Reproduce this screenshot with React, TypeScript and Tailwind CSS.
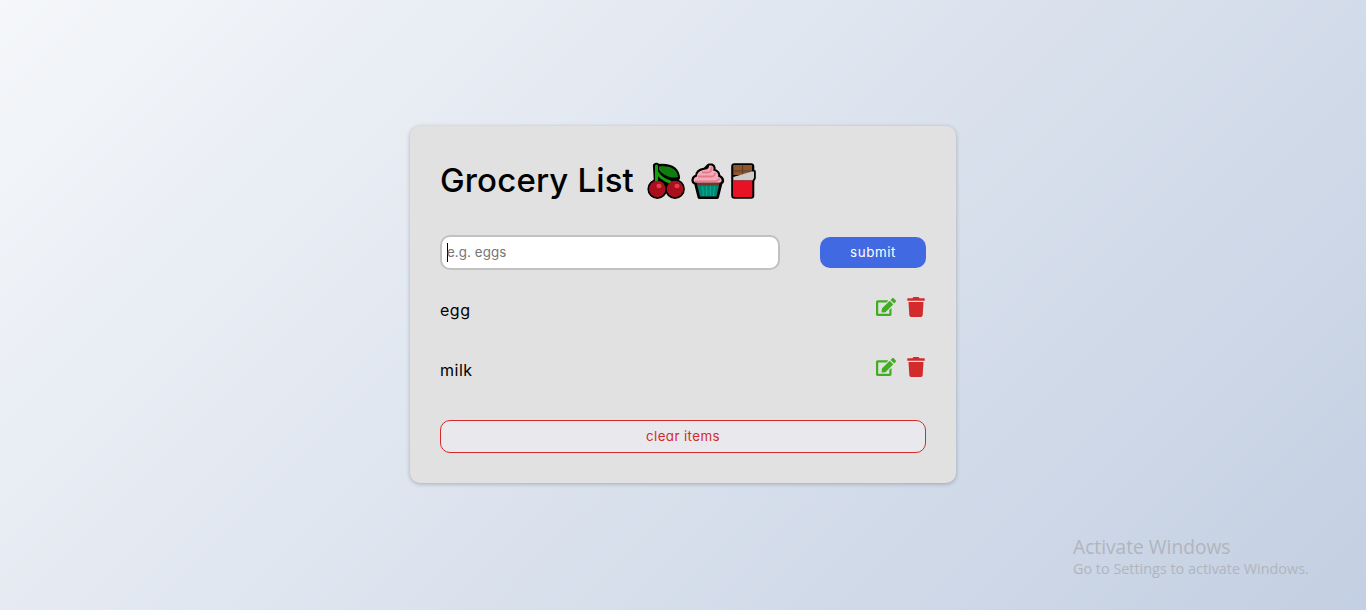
import React from "react";
import { FaEdit, FaTrash } from "react-icons/fa";

function Cherries() {
  return (
    <svg width="38" height="38" viewBox="0 0 38 38" className="shrink-0">
      <g stroke="#000" strokeWidth="4.2" strokeLinejoin="round" fill="#000">
        <path d="M8 3.5 Q9.500 2 11 4 C22 3 30 5 31 16 C25 18 18 17.500 14 13 L21 21 H9 Z" />
        <circle cx="10.3" cy="27" r="7.8" />
        <circle cx="28" cy="27" r="7.8" />
      </g>
      <path d="M12 4.500 C22 3.500 30 6 31 15 C25 17 17 14 12 8 Z" fill="#107c10" />
      <path d="M9.500 4 V21 M10.500 11 C13 15 17 18 23 20" stroke="#13a10e" strokeWidth="3" fill="none" strokeLinecap="round" />
      <circle cx="10.3" cy="27" r="8.3" fill="#a90f1c" />
      <circle cx="28" cy="27" r="8.3" fill="#a90f1c" />
      <ellipse cx="12" cy="24" rx="2.600" ry="2.200" fill="#e0404e" />
      <ellipse cx="30" cy="24" rx="2.600" ry="2.200" fill="#e0404e" />
    </svg>
  );
}

function Cupcake() {
  return (
    <svg width="34" height="38" viewBox="0 0 34 38" className="shrink-0">
      <path d="M18 3.500 H21 C23 4.500 23 7 22 8.500 C26 9 28 12 27 14.500 C32 16 32 20 29.500 21 L26 35 H8.500 L5 21 C1 20 2 15 6 14.500 C6 10 10 8 14 7.500 Z" fill="#000" stroke="#000" strokeWidth="4" strokeLinejoin="round" />
      <path d="M5.500 20 H29 L27.500 25 H6.500 Z" fill="#6b3a2e" />
      <path d="M6.500 23.500 H28 L25.500 34.500 H9 Z" fill="#008575" />
      <path d="M11.500 24 L12.500 34 M15.500 24 V34 M19.500 24 V34 M23.500 24 L22.500 34" stroke="#00a88c" strokeWidth="1.300" />
      <path d="M18 3.500 H20.500 C23 4.500 23 7 22 8.500 C26 9 28 12 27 14.500 C31.500 16 31.500 20 29 20.500 H5 C1.500 20 2 15.500 6 14.500 C6 10 10 8 15 7.500 Q18 7 18 3.500 Z" fill="#f4abba" />
      <path d="M7 14.500 H20 C23 14.500 24 13 24 11 M4 19.300 H23 C26 19 28 18 28.500 16.500 M11 10.500 H17 C20 10 21 8 20.500 5" stroke="#e67a8b" strokeWidth="1.800" fill="none" />
    </svg>
  );
}

function Chocolate() {
  return (
    <svg width="27" height="38" viewBox="0 0 27 38" className="shrink-0">
      <path d="M3.500 3 H20 Q21.500 3 21.500 4.500 V9.500 H23 V16 L21.500 18.500 V33.500 Q21.500 35 20 35 H3.500 Q2 35 2 33.500 V4.500 Q2 3 3.500 3 Z" fill="#000" stroke="#000" strokeWidth="3.600" strokeLinejoin="round" />
      <path d="M2.300 3 H21 V13 H2.300 Z" fill="#8e562e" />
      <path d="M11.500 3 V13 M2.300 9 H21" stroke="#603d27" strokeWidth="1.200" />
      <path d="M2.300 15 L21 9.500 H23 V16 L21.500 18.500 H2.300 Z" fill="#ccc" />
      <path d="M2 18.500 H21.300 V33.500 Q21.300 35 19.800 35 H3.500 Q2 35 2 33.500 Z" fill="#e81224" />
    </svg>
  );
}

function Item({ name }: { name: string }) {
  return (
    <li className="flex h-[60px] items-start justify-between">
      <p className="pt-[2px] text-[16px] leading-6 tracking-[0.5px]">{name}</p>
      <div className="flex gap-[10px] pt-px">
        <button aria-label={`edit ${name}`} className="text-[#42ad24]"><FaEdit size={20} /></button>
        <button aria-label={`delete ${name}`} className="text-[#d32b2b]"><FaTrash size={20} /></button>
      </div>
    </li>
  );
}

export default function App() {
  return (
    <main className="relative flex h-[610px] justify-center overflow-hidden bg-[linear-gradient(135deg,#f5f7fa_0%,#c3cfe2_100%)] pt-[126px] font-[Inter,sans-serif] text-black [font-feature-settings:'cv11']">
      <section className="h-[357px] w-[546px] rounded-[10px] bg-[#e1e1e1] px-[30px] shadow-[0_1px_4px_rgba(0,0,0,0.25)]">
        <h1 className="flex h-[109px] items-start pt-[36px]">
          <span className="-mt-px w-[207px] whitespace-nowrap text-[33px] leading-[38px] font-medium tracking-[0.15px]">Grocery List</span>
          <span className="flex gap-[6px]"><Cherries /><Cupcake /><Chocolate /></span>
        </h1>
        <form className="flex h-[35px] items-center justify-between">
          <div className="flex h-[35px] w-[340px] items-center rounded-[10px] border-2 border-[#c1c1c1] bg-white pl-[5px]">
            <span className="h-[19px] w-px bg-black" />
            <span className="-ml-px text-[13.333px] tracking-[0.1px] text-[#757575]">e.g. eggs</span>
          </div>
          <button type="button" className="h-[31px] w-[106px] rounded-[10px] bg-[#4169e1] text-[13.333px] tracking-[0.6px] text-white">submit</button>
        </form>
        <ul className="h-[150px] pt-[26px]">
          <Item name="egg" />
          <Item name="milk" />
        </ul>
        <button className="block h-[33px] w-full rounded-[10px] border border-[#d32b2b] bg-[#e8e8ed] text-[13.333px] tracking-[0.4px] text-[#d32b2b]">clear items</button>
      </section>
      <aside className="absolute top-[534px] left-[1073px] whitespace-nowrap font-['Open_Sans',sans-serif] text-[#b0b5bd]">
        <p className="text-[19.2px] leading-[25px]">Activate Windows</p>
        <p className="text-[14.4px] leading-5">Go to Settings to activate Windows.</p>
      </aside>
    </main>
  );
}
